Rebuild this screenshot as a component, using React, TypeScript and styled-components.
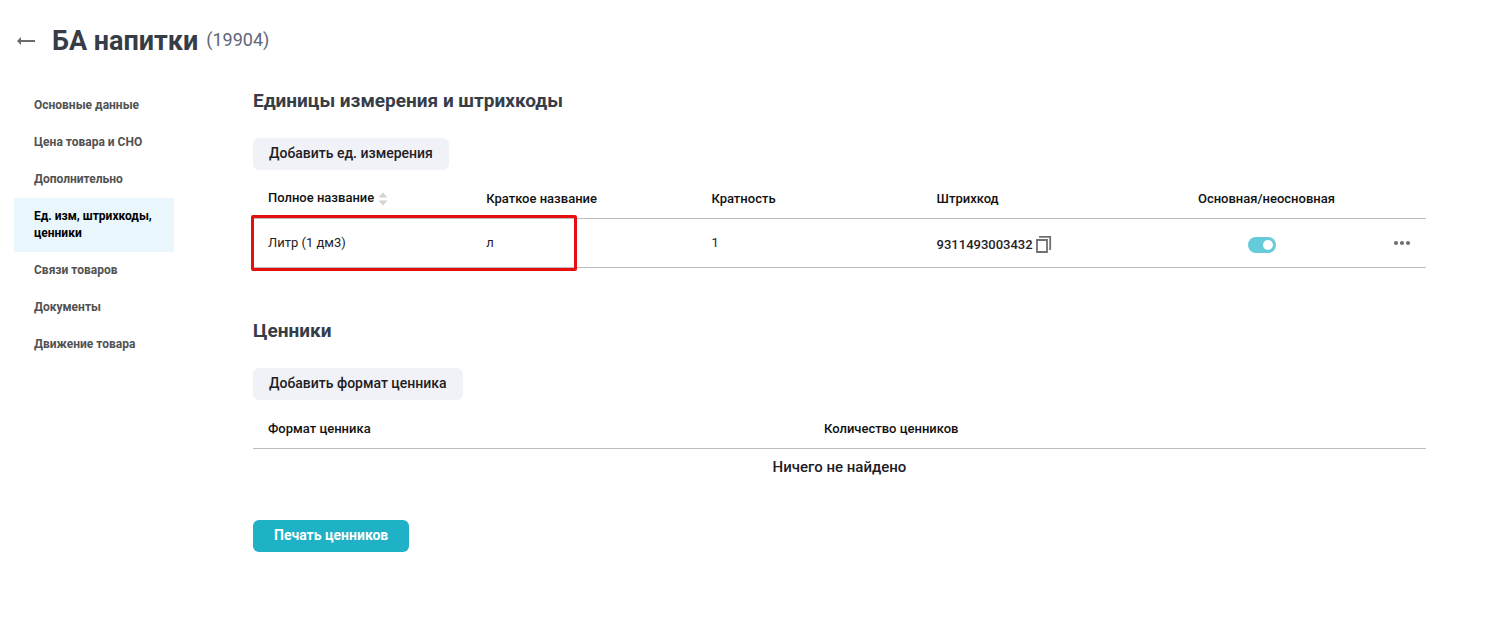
import React, { useState } from 'react';
import styled, { createGlobalStyle } from 'styled-components';

const GlobalStyle = createGlobalStyle`
  *, *::before, *::after { box-sizing: border-box; }
  body {
    margin: 0;
    background: #fff;
    color: #1f2226;
    font-family: Roboto, "Liberation Sans", sans-serif;
    font-size: 12px;
  }
  button { font-family: inherit; cursor: pointer; }
`;

const Page = styled.div`
  padding: 20px 79px 20px 14px;
`;

const Header = styled.header`
  display: flex;
  align-items: center;
  height: 40px;
`;

const BackButton = styled.button`
  display: flex;
  padding: 0;
  margin: 2px 14px 0 0;
  border: 0;
  background: none;
  color: #6b6b6b;
`;

const Title = styled.h1`
  margin: 2px 8px 0 0;
  font-size: 27px;
  line-height: 40px;
  font-weight: 700;
  color: #363d47;
`;

const Code = styled.span`
  font-size: 18px;
  line-height: 40px;
  color: #5d6778;
`;

const Body = styled.div`
  display: flex;
  align-items: flex-start;
  gap: 79px;
  padding-top: 27px;
`;

const Nav = styled.nav`
  display: flex;
  flex-direction: column;
  flex: 0 0 160px;
`;

const NavLink = styled.a<{ $active?: boolean }>`
  padding: 10px 20px;
  font-size: 12px;
  line-height: 17px;
  font-weight: 700;
  text-decoration: none;
  color: ${(p) => (p.$active ? '#000' : '#525252')};
  background: ${(p) => (p.$active ? '#e9f7fd' : 'transparent')};
`;

const Main = styled.main`
  flex: 1;
  min-width: 0;
`;

const Section = styled.section`
  & + & { margin-top: 49px; }
`;

const SectionTitle = styled.h2`
  margin: 0 0 23px;
  font-size: 19px;
  line-height: 28px;
  font-weight: 700;
  color: #363d47;
`;

const SecondaryButton = styled.button`
  display: block;
  height: 32px;
  padding: 0 16px 2px;
  border: 0;
  border-radius: 6px;
  background: #f1f2f7;
  color: #1d2025;
  font-size: 14px;
  font-weight: 500;
`;

const PrimaryButton = styled(SecondaryButton)`
  margin-top: 41px;
  padding: 0 21px 2px;
  background: #1fb1c6;
  color: #fff;
  font-weight: 700;
`;

const TableArea = styled.div`
  position: relative;
`;

const Table = styled.table`
  width: 100%;
  table-layout: fixed;
  border-collapse: separate;
  border-spacing: 0;
`;

const HeadCell = styled.th<{ $width: string; $center?: boolean }>`
  width: ${(p) => p.$width};
  height: 49px;
  padding: 8px 15px 0;
  border-bottom: 1px solid #bdbdbd;
  text-align: ${(p) => (p.$center ? 'center' : 'left')};
  font-size: 13px;
  font-weight: 500;
  white-space: nowrap;
  color: #111;
`;

const Cell = styled.td`
  height: 49px;
  padding: 0 15px 2px;
  border-bottom: 1px solid #bdbdbd;
  font-size: 13px;
`;

const SwitchCell = styled(Cell)`
  padding: 4px 24px 0 15px;
  text-align: center;
`;

const MenuCell = styled(Cell)`
  padding: 0 7px 2px;
`;

const SortButton = styled.button`
  padding: 0;
  margin-left: 4px;
  border: 0;
  background: none;
  vertical-align: middle;
  svg { display: block; }
`;

const Barcode = styled.span`
  display: flex;
  align-items: center;
  gap: 1px;
  margin-top: 4px;
  font-weight: 500;
`;

const IconButton = styled.button`
  display: inline-flex;
  padding: 0;
  border: 0;
  background: none;
  color: #707070;
  vertical-align: middle;
`;

const Switch = styled.input`
  appearance: none;
  display: inline-block;
  width: 28px;
  height: 16px;
  margin: 0;
  padding: 3px;
  border-radius: 8px;
  background: #b9bec5;
  vertical-align: middle;
  cursor: pointer;

  &::before {
    content: '';
    display: block;
    width: 10px;
    height: 10px;
    border-radius: 50%;
    background: #fff;
  }
  &:checked { background: #65cbd8; }
  &:checked::before { margin-left: 12px; }
`;

const Highlight = styled.div`
  position: absolute;
  top: 45px;
  left: -2px;
  width: 326px;
  height: 56px;
  border: 3px solid #e60f0f;
  border-radius: 2px;
  pointer-events: none;
`;

const Empty = styled.p`
  margin: 0;
  padding-top: 6px;
  text-align: center;
  font-size: 15px;
  line-height: 24px;
  font-weight: 500;
  color: #1d2025;
`;

const ArrowIcon = () => (
  <svg width="24" height="16" viewBox="0 0 24 16" aria-hidden="true">
    <path d="M7 7H21V9H7V12L3 8l4-4z" fill="currentColor" />
  </svg>
);

const SortIcon = () => (
  <svg width="10" height="14" viewBox="0 0 10 14" aria-hidden="true">
    <path d="M5 .5 9.5 5.5H.5zM5 13.5.5 8.5h9z" fill="#d3d3d3" />
  </svg>
);

const CopyIcon = () => (
  <svg width="18" height="18" viewBox="0 0 18 18" aria-hidden="true">
    <path d="M3 5h10v12H3zM5 1.8h11.2V15" fill="none" stroke="currentColor" strokeWidth="1.8" />
  </svg>
);

const DotsIcon = () => (
  <svg width="18" height="6" viewBox="0 0 18 6" fill="currentColor" aria-hidden="true">
    <circle cx="3" cy="3" r="2.1" />
    <circle cx="9" cy="3" r="2.1" />
    <circle cx="15" cy="3" r="2.1" />
  </svg>
);

const navItems = [
  'Основные данные',
  'Цена товара и СНО',
  'Дополнительно',
  'Ед. изм, штрихкоды, ценники',
  'Связи товаров',
  'Документы',
  'Движение товара',
];

export default function App() {
  const [primary, setPrimary] = useState(true);

  return (
    <>
      <GlobalStyle />
      <Page>
        <Header>
          <BackButton type="button" aria-label="Назад"><ArrowIcon /></BackButton>
          <Title>БА напитки</Title>
          <Code>(19904)</Code>
        </Header>
        <Body>
          <Nav>
            {navItems.map((item, i) => (
              <NavLink key={item} href="#" $active={i === 3}>{item}</NavLink>
            ))}
          </Nav>
          <Main>
            <Section>
              <SectionTitle>Единицы измерения и штрихкоды</SectionTitle>
              <SecondaryButton type="button">Добавить ед. измерения</SecondaryButton>
              <TableArea>
                <Table>
                  <thead>
                    <tr>
                      <HeadCell $width="18.6%">
                        Полное название
                        <SortButton type="button" aria-label="Сортировать"><SortIcon /></SortButton>
                      </HeadCell>
                      <HeadCell $width="19.2%">Краткое название</HeadCell>
                      <HeadCell $width="19.2%">Кратность</HeadCell>
                      <HeadCell $width="19.2%">Штрихкод</HeadCell>
                      <HeadCell $width="20.4%" $center>Основная/неосновная</HeadCell>
                      <HeadCell $width="3.4%" aria-label="Действия" />
                    </tr>
                  </thead>
                  <tbody>
                    <tr>
                      <Cell>Литр (1 дм3)</Cell>
                      <Cell>л</Cell>
                      <Cell>1</Cell>
                      <Cell>
                        <Barcode>
                          9311493003432
                          <IconButton type="button" aria-label="Копировать"><CopyIcon /></IconButton>
                        </Barcode>
                      </Cell>
                      <SwitchCell>
                        <Switch
                          type="checkbox"
                          aria-label="Основная/неосновная"
                          checked={primary}
                          onChange={(e) => setPrimary(e.target.checked)}
                        />
                      </SwitchCell>
                      <MenuCell>
                        <IconButton type="button" aria-label="Меню"><DotsIcon /></IconButton>
                      </MenuCell>
                    </tr>
                  </tbody>
                </Table>
                <Highlight />
              </TableArea>
            </Section>
            <Section>
              <SectionTitle>Ценники</SectionTitle>
              <SecondaryButton type="button">Добавить формат ценника</SecondaryButton>
              <Table>
                <thead>
                  <tr>
                    <HeadCell $width="47.4%">Формат ценника</HeadCell>
                    <HeadCell $width="52.6%">Количество ценников</HeadCell>
                  </tr>
                </thead>
              </Table>
              <Empty>Ничего не найдено</Empty>
              <PrimaryButton type="button">Печать ценников</PrimaryButton>
            </Section>
          </Main>
        </Body>
      </Page>
    </>
  );
}
